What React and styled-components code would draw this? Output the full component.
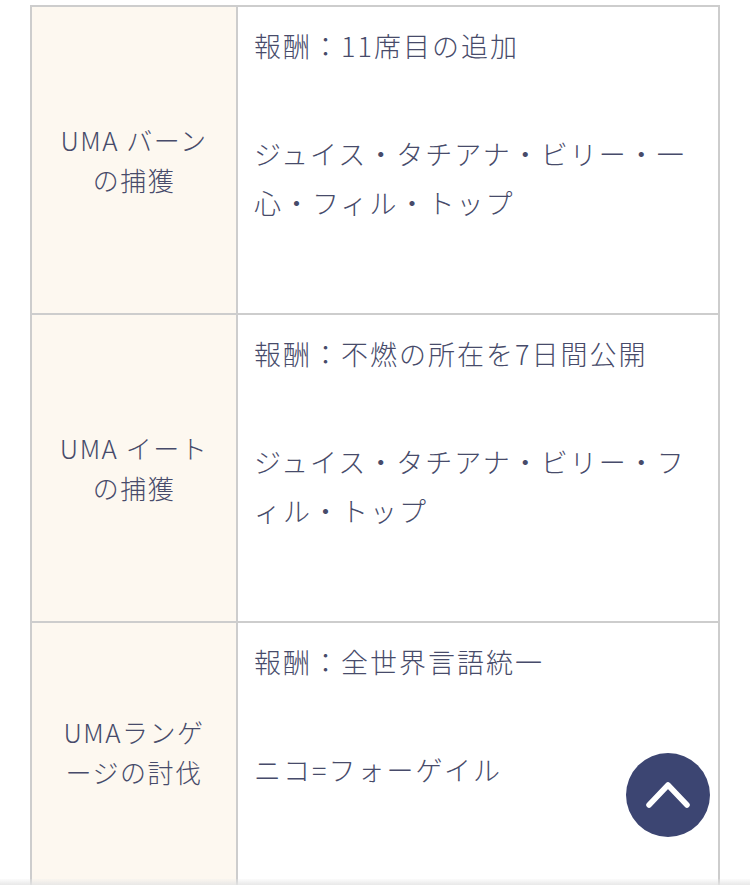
import React from 'react';
import styled, { createGlobalStyle } from 'styled-components';

const GlobalStyle = createGlobalStyle`
    html, body {
        margin: 0;
        padding: 0;
        background: #ffffff;
    }
    body {
        font-family: "Noto Sans CJK JP", "Noto Sans", sans-serif;
        font-weight: 300;
        color: #474b6a;
    }
`;

const Page = styled.div`
    padding: 5px 30px 0;
`;

const Table = styled.div`
    display: grid;
    grid-template-columns: 206px 1fr;
    border-top: 2px solid #cdcdcd;
    border-left: 2px solid #cdcdcd;
`;

const HeadCell = styled.div`
    display: flex;
    align-items: center;
    justify-content: center;
    text-align: center;
    background: #fdf8f0;
    border-right: 2px solid #cdcdcd;
    border-bottom: ${(p) => (p.$last ? 'none' : '2px solid #cdcdcd')};
    padding: 0 10px ${(p) => (p.$last ? '12px' : '0')};
    font-size: 26px;
    line-height: 40px;
    letter-spacing: 1.5px;
`;

const BodyCell = styled.div`
    border-right: 2px solid #cdcdcd;
    border-bottom: ${(p) => (p.$last ? 'none' : '2px solid #cdcdcd')};
    padding: 14px 14px ${(p) => (p.$last ? '98px' : '86px')} 16px;
    font-size: 27px;
    line-height: 49px;
    letter-spacing: 2px;
`;

const Reward = styled.p`
    margin: 0 0 59px;
`;

const Names = styled.p`
    margin: 0;
`;

const TopButton = styled.button`
    position: fixed;
    right: 40px;
    bottom: 48px;
    width: 84px;
    height: 84px;
    border: none;
    border-radius: 50%;
    background: #3c4572;
    display: flex;
    align-items: center;
    justify-content: center;
    padding: 0;
    cursor: pointer;
`;

const BottomShade = styled.div`
    position: fixed;
    left: 0;
    right: 0;
    bottom: 0;
    height: 6px;
    background: linear-gradient(to bottom, rgba(235, 235, 235, 0.2), rgba(228, 228, 228, 0.85));
    pointer-events: none;
`;

const rows = [
    {
        head: ['UMA バーン', 'の捕獲'],
        reward: '報酬：11席目の追加',
        names: 'ジュイス・タチアナ・ビリー・一心・フィル・トップ',
    },
    {
        head: ['UMA イート', 'の捕獲'],
        reward: '報酬：不燃の所在を7日間公開',
        names: 'ジュイス・タチアナ・ビリー・フィル・トップ',
    },
    {
        head: ['UMAランゲ', 'ージの討伐'],
        reward: '報酬：全世界言語統一',
        names: 'ニコ=フォーゲイル',
    },
];

const App = () => {
    return (
        <Page>
            <GlobalStyle />
            <Table>
                {rows.map((row, i) => {
                    const last = i === rows.length - 1;
                    return (
                        <React.Fragment key={row.reward}>
                            <HeadCell $last={last}>
                                <div>
                                    {row.head[0]}
                                    <br />
                                    {row.head[1]}
                                </div>
                            </HeadCell>
                            <BodyCell $last={last}>
                                <Reward>{row.reward}</Reward>
                                <Names>{row.names}</Names>
                            </BodyCell>
                        </React.Fragment>
                    );
                })}
            </Table>
            <TopButton aria-label="ページトップへ">
                <svg width="44" height="28" viewBox="0 0 44 28">
                    <path
                        d="M3 24 L22 4 L41 24"
                        fill="none"
                        stroke="#ffffff"
                        strokeWidth="5.5"
                        strokeLinecap="round"
                        strokeLinejoin="round"
                    />
                </svg>
            </TopButton>
            <BottomShade />
        </Page>
    );
};

export default App;
